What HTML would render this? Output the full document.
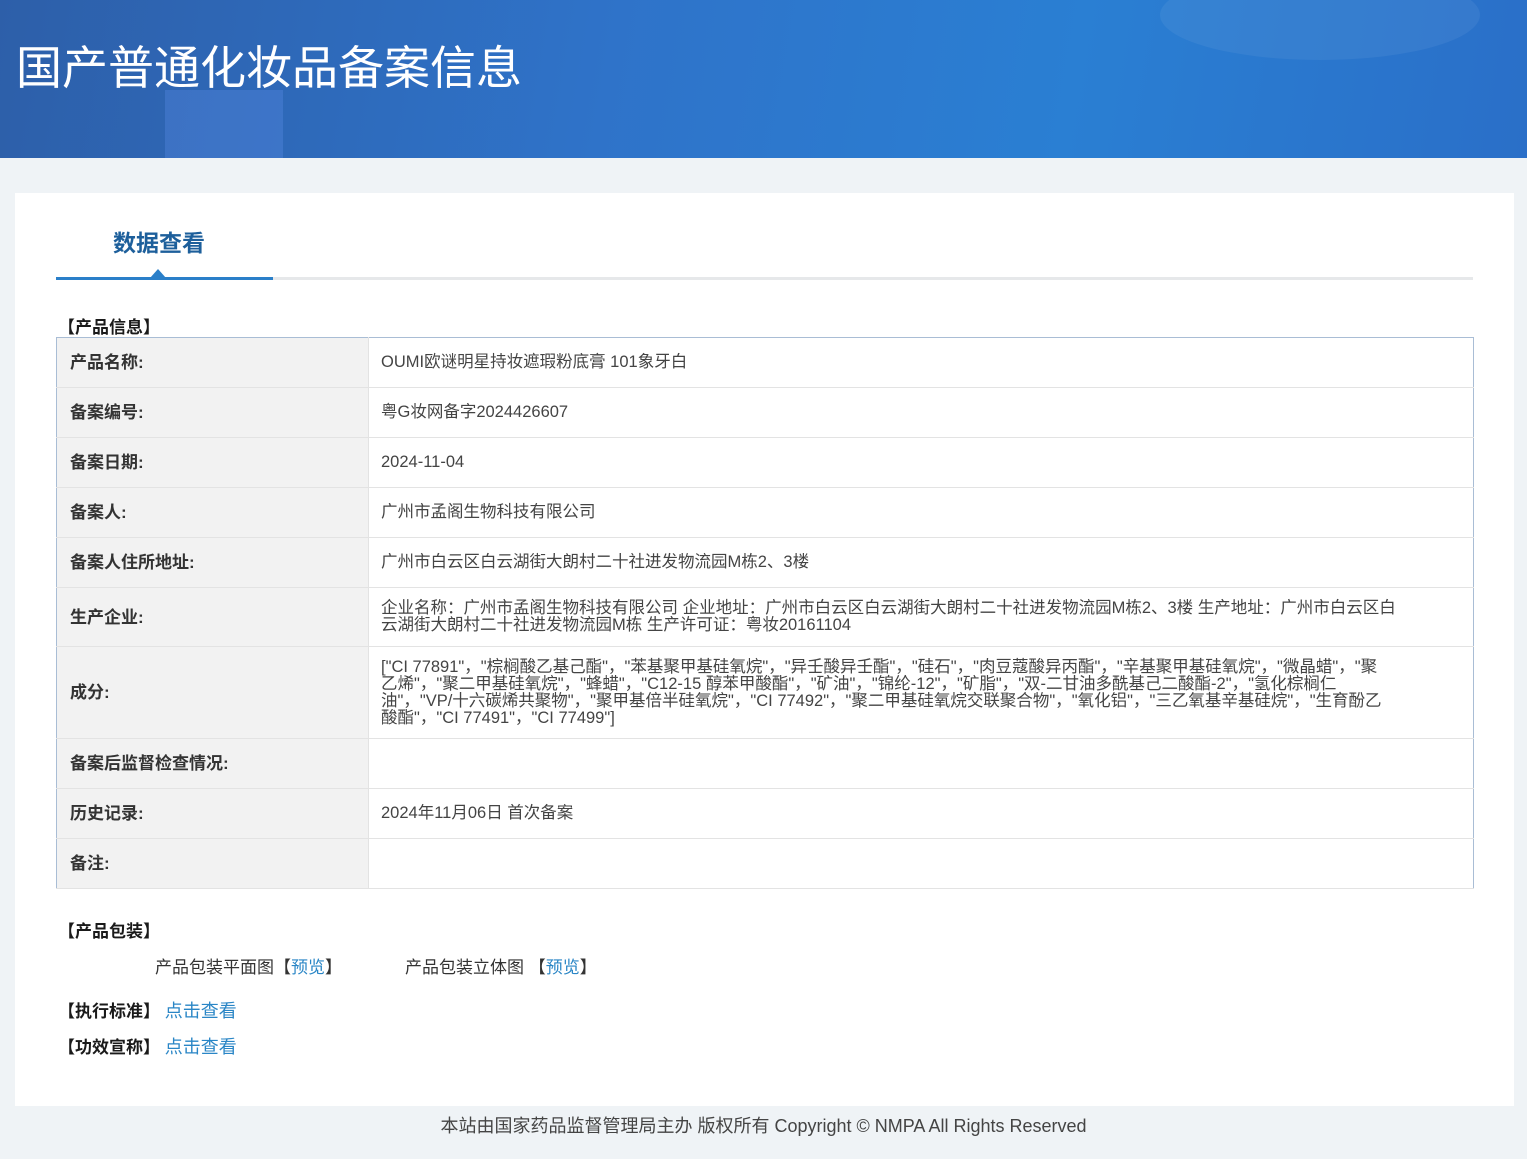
<!DOCTYPE html>
<html><head><meta charset="utf-8"><style>
*{margin:0;padding:0;box-sizing:border-box}
body{width:1527px;height:1159px;background:#eff3f6;font-family:"Liberation Sans","Noto Sans CJK SC",sans-serif;color:#333;position:relative;overflow:hidden}
.hd{position:absolute;left:0;top:0;width:1527px;height:158px;background:linear-gradient(100deg,#2d5fa9 0%,#2f73c9 40%,#2a7fd3 70%,#2a6fc8 100%);overflow:hidden}
.hd .b1{position:absolute;left:165px;top:90px;width:118px;height:70px;background:rgba(90,140,230,.35)}
.hd .b2{position:absolute;left:1160px;top:-30px;width:320px;height:90px;border-radius:50%;background:rgba(255,255,255,.06)}
.hd h1{position:absolute;left:16px;top:32px;font-size:46px;font-weight:normal;color:#fff;letter-spacing:0}
.card{position:absolute;left:15px;top:193px;width:1499px;height:913px;background:#fff}
.tab{position:absolute;left:113px;top:224px;font-size:23px;font-weight:bold;color:#1d5f9b}
.ln{position:absolute;left:56px;top:277px;width:1417px;height:3px;background:#e6e8ea}
.ln2{position:absolute;left:56px;top:277px;width:217px;height:3px;background:#2a7fc9}
.tri{position:absolute;left:150px;top:269px;width:0;height:0;border-left:8px solid transparent;border-right:8px solid transparent;border-bottom:9px solid #2a7fc9}
.sec{position:absolute;left:58px;font-size:17px;font-weight:bold;color:#1a1a1a}
table{position:absolute;left:56px;top:337px;width:1418px;border-collapse:collapse;border:1px solid #a9bdd5;font-size:16px}
td{border-bottom:1px solid #e3e3e3;padding:0 12px;vertical-align:middle;line-height:17px}
td.l{width:312px;background:#f2f2f2;font-weight:bold;color:#333;border-right:1px solid #e3e3e3;padding-left:13px;font-size:17px}
td.v{color:#444;padding-right:75px;font-size:16.5px}
td.ing{padding-right:90px}
a{color:#2a86c6;text-decoration:none}
.t{position:absolute;font-size:17px;color:#333}
.ft{position:absolute;left:0;width:1527px;top:1112px;text-align:center;font-size:18px;color:#444}
</style></head><body>
<div class="hd"><div class="b1"></div><div class="b2"></div><h1>国产普通化妆品备案信息</h1></div>
<div class="card"></div>
<div class="tab">数据查看</div>
<div class="ln"></div><div class="ln2"></div><div class="tri"></div>
<div class="sec" style="top:313px">【产品信息】</div>
<table>
<tr style="height:50px"><td class="l">产品名称:</td><td class="v">OUMI欧谜明星持妆遮瑕粉底膏 101象牙白</td></tr>
<tr style="height:50px"><td class="l">备案编号:</td><td class="v">粤G妆网备字2024426607</td></tr>
<tr style="height:50px"><td class="l">备案日期:</td><td class="v">2024-11-04</td></tr>
<tr style="height:50px"><td class="l">备案人:</td><td class="v">广州市孟阁生物科技有限公司</td></tr>
<tr style="height:50px"><td class="l">备案人住所地址:</td><td class="v">广州市白云区白云湖街大朗村二十社进发物流园M栋2、3楼</td></tr>
<tr style="height:59px"><td class="l">生产企业:</td><td class="v">企业名称：广州市孟阁生物科技有限公司 企业地址：广州市白云区白云湖街大朗村二十社进发物流园M栋2、3楼 生产地址：广州市白云区白云湖街大朗村二十社进发物流园M栋 生产许可证：粤妆20161104</td></tr>
<tr style="height:92px"><td class="l">成分:</td><td class="v ing">["CI 77891"，"棕榈酸乙基己酯"，"苯基聚甲基硅氧烷"，"异壬酸异壬酯"，"硅石"，"肉豆蔻酸异丙酯"，"辛基聚甲基硅氧烷"，"微晶蜡"，"聚乙烯"，"聚二甲基硅氧烷"，"蜂蜡"，"C12-15 醇苯甲酸酯"，"矿油"，"锦纶-12"，"矿脂"，"双-二甘油多酰基己二酸酯-2"，"氢化棕榈仁油"，"VP/十六碳烯共聚物"，"聚甲基倍半硅氧烷"，"CI 77492"，"聚二甲基硅氧烷交联聚合物"，"氧化铝"，"三乙氧基辛基硅烷"，"生育酚乙酸酯"，"CI 77491"，"CI 77499"]</td></tr>
<tr style="height:50px"><td class="l">备案后监督检查情况:</td><td class="v"></td></tr>
<tr style="height:50px"><td class="l">历史记录:</td><td class="v">2024年11月06日 首次备案</td></tr>
<tr style="height:50px"><td class="l">备注:</td><td class="v"></td></tr>
</table>
<div class="sec" style="top:917px">【产品包装】</div>
<div class="t" style="left:155px;top:953px">产品包装平面图【<a>预览</a>】</div>
<div class="t" style="left:405px;top:953px">产品包装立体图 【<a>预览</a>】</div>
<div class="sec" style="top:997px">【执行标准】 <a style="font-weight:normal;font-size:18px">点击查看</a></div>
<div class="sec" style="top:1033px">【功效宣称】 <a style="font-weight:normal;font-size:18px">点击查看</a></div>
<div class="ft">本站由国家药品监督管理局主办 版权所有 Copyright © NMPA All Rights Reserved</div>
</body></html>
